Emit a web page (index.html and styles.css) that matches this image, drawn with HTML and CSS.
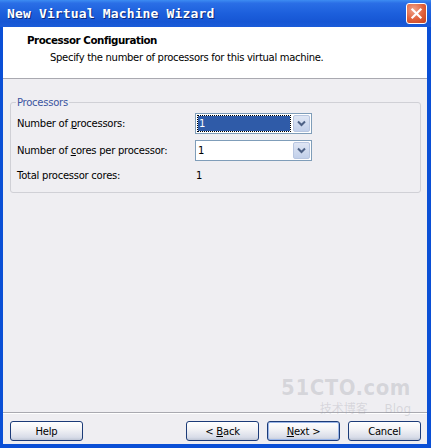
FILE: index.html
```html
<!DOCTYPE html>
<html>
<head>
<meta charset="utf-8">
<link rel="stylesheet" href="styles.css">
</head>
<body>
<div class="window">
  <div class="titlebar">
    <span class="title">New Virtual Machine Wizard</span>
    <span class="close"><svg width="21" height="21" viewBox="0 0 21 21"><path d="M6 6 L15 15 M15 6 L6 15" stroke="#fff" stroke-width="2.4" stroke-linecap="square"/></svg></span>
  </div>
  <div class="frame">
    <div class="header">
      <div class="h-title">Processor Configuration</div>
      <div class="h-sub">Specify the number of processors for this virtual machine.</div>
    </div>
    <div class="body">
      <fieldset class="group">
        <legend>Processors</legend>
        <div class="row">
          <span class="label">Number of <u>p</u>rocessors:</span>
          <span class="combo"><span class="val sel"><span class="focus">1</span></span><span class="btn"><svg width="9" height="7" viewBox="0 0 9 7"><path d="M1 1.5 L4.5 5 L8 1.5" fill="none" stroke="#4d6185" stroke-width="2"/></svg></span></span>
        </div>
        <div class="row">
          <span class="label">Number of <u>c</u>ores per processor:</span>
          <span class="combo"><span class="val">1</span><span class="btn"><svg width="9" height="7" viewBox="0 0 9 7"><path d="M1 1.5 L4.5 5 L8 1.5" fill="none" stroke="#4d6185" stroke-width="2"/></svg></span></span>
        </div>
        <div class="row">
          <span class="label">Total processor cores:</span>
          <span class="plain">1</span>
        </div>
      </fieldset>
    </div>
    <div class="footer">
      <button class="b">Help</button>
      <span class="spacer"></span>
      <button class="b">&lt; <u>B</u>ack</button>
      <button class="b def"><u>N</u>ext &gt;</button>
      <button class="b">Cancel</button>
    </div>
    <div class="wm">
      <div class="wm1">51CTO.com</div>
      <div class="wm2">技术博客 <span>Blog</span></div>
    </div>
  </div>
</div>
</body>
</html>
```
FILE: styles.css
```css
html, body { margin: 0; padding: 0; }
body { width: 431px; height: 448px; overflow: hidden; font-family: Tahoma, "DejaVu Sans", sans-serif; }
.window {
  width: 431px; height: 448px; box-sizing: border-box;
  display: flex; flex-direction: column;
  background: #0a4fd6;
}
.titlebar {
  height: 27px; flex: none;
  display: flex; align-items: center; justify-content: space-between;
  padding: 0 4px 0 7px;
  background: linear-gradient(#3d8cf2 0%, #2a6ee6 12%, #1c5fdc 50%, #1656d4 80%, #1a5bd9 100%);
}
.title {
  font-family: "DejaVu Sans Mono", monospace; font-weight: bold; font-size: 13px;
  color: #fff; text-shadow: 1px 1px 0 #0b2a7a; letter-spacing: 0.15px;
}
.close {
  width: 21px; height: 21px; border-radius: 3px; border: 1px solid #fff;
  box-sizing: border-box; display: flex; align-items: center; justify-content: center;
  background: radial-gradient(circle at 35% 30%, #f0a48c, #e0603a 55%, #c5421f);
}
.close svg { width: 19px; height: 19px; }
.frame {
  flex: 1; margin: 0 4px 4px 3px; position: relative;
  display: flex; flex-direction: column; background: #efeef2;
}
.header {
  height: 52px; flex: none; box-sizing: border-box;
  background: #fff; border-bottom: 1px solid #a9a9b0;
  padding: 7px 0 0 24px;
}
.h-title { font-family: "DejaVu Sans", sans-serif; font-weight: bold; font-size: 10.3px; color: #000; height: 16px; letter-spacing: -0.45px; }
.h-sub { font-family: "DejaVu Sans", sans-serif; font-size: 10px; color: #000; padding-left: 23px; margin-top: 2px; letter-spacing: -0.3px; }
.body { flex: 1; padding: 18px 6px 0 7px; border-bottom: 1px solid #a9a9b0; box-shadow: 0 1px 0 #fff; }
.group {
  margin: 0; padding: 2px 6px 6px 6px; border: 1px solid #d0d0d6; border-radius: 3px;
  height: 96px; box-sizing: border-box;
}
.group legend { font-family: "DejaVu Sans", sans-serif; font-size: 10px; color: #3b55a0; padding: 0 1px; margin-left: -1px; letter-spacing: -0.25px; }
.row { display: flex; align-items: center; height: 27px; font-family: "DejaVu Sans", sans-serif; font-size: 10px; letter-spacing: -0.25px; color: #000; }
.row:nth-child(4) { margin-top: -2px; }
.label { width: 178px; flex: none; }
.combo {
  display: flex; width: 117px; height: 21px; box-sizing: border-box;
  border: 1px solid #7f9db9; background: #fff;
}
.val { flex: 1; padding: 2px 2px; font-size: 10px; display: flex; align-items: center; }
.val.sel { padding: 2px; }
.sel .focus {
  flex: 1; height: 100%; box-sizing: border-box; background: #2f5ba8; color: #fff;
  outline: 1px dotted #000; padding-left: 1px; display: flex; align-items: center;
}
.btn {
  width: 17px; flex: none; margin: 1px; box-sizing: border-box;
  border: 1px solid #b8c6e0; border-radius: 2px;
  background: linear-gradient(#dfe6f4, #c2d0ea);
  display: flex; align-items: center; justify-content: center;
}
.plain { padding-left: 1px; }
.footer {
  height: 31px; flex: none; display: flex; align-items: flex-start; gap: 8px;
  padding: 8px 6px 0 7px; box-sizing: border-box;
}
.spacer { flex: 1; }
.b {
  width: 73px; height: 20px; box-sizing: border-box; padding: 0;
  font-family: "DejaVu Sans", sans-serif; font-size: 10px; color: #000; letter-spacing: -0.2px;
  border: 1px solid #1c3b78; border-radius: 3px;
  background: linear-gradient(#ffffff 0%, #f3f3f6 40%, #d8dce8 85%, #bfc6d6 100%);
}
.b.def { border-color: #1c3b78; box-shadow: inset 0 0 0 1px #9bb6e8; }
.wm {
  position: absolute; right: 16px; top: 349px; text-align: right; pointer-events: none;
  color: rgba(150,150,160,0.28);
}
.wm1 { font-family: "DejaVu Sans Condensed", "DejaVu Sans", sans-serif; font-stretch: condensed; font-weight: bold; font-size: 22px; letter-spacing: 0.5px; line-height: 23px; }
.wm2 { font-family: "Noto Sans CJK SC", sans-serif; font-size: 12px; line-height: 14px; margin-top: 2px; }
.wm2 span { font-family: "DejaVu Sans", sans-serif; margin-left: 14px; }
```
